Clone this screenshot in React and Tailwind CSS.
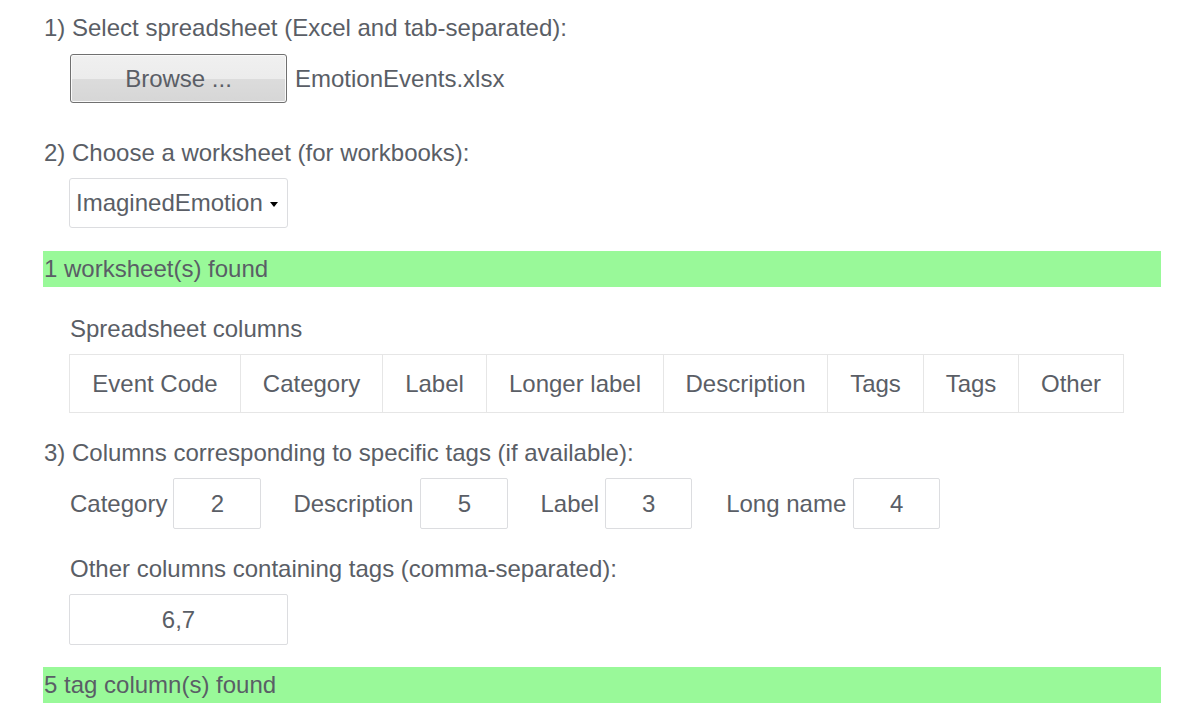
import React from "react";

const cols = [
  ["Event Code", 170],
  ["Category", 142],
  ["Label", 104],
  ["Longer label", 177],
  ["Description", 164],
  ["Tags", 96],
  ["Tags", 95],
  ["Other", 105],
];

function NumBox({ value, w }) {
  return (
    <div
      className="flex items-center justify-center h-[51px] border border-[#dcdde0] rounded-[2px] bg-white"
      style={{ width: w }}
    >
      {value}
    </div>
  );
}

export default function App() {
  return (
    <div
      className="w-[1186px] h-[719px] bg-white text-[#5a5e66] text-[24px] leading-[26px] overflow-hidden"
      style={{ fontFamily: '"Liberation Sans", Arial, sans-serif' }}
    >
      <div className="pl-[43px] w-[1161px]">
        <p className="pt-[15px] pl-[1px]">1) Select spreadsheet (Excel and tab-separated):</p>
        <div className="mt-[13px] ml-[27px] flex items-center gap-[8px]">
          <div className="w-[217px] h-[49px] rounded-[3px] border border-[#707070] bg-[linear-gradient(#f0f0f0_0%,#ececec_50%,#dcdcdc_50%,#d6d6d6_100%)] flex items-center justify-center shadow-[inset_0_0_0_1px_#fafafa]">
            Browse ...
          </div>
          <span>EmotionEvents.xlsx</span>
        </div>

        <p className="mt-[37px] pl-[1px]">2) Choose a worksheet (for workbooks):</p>
        <div className="mt-[12px] ml-[26px] w-[219px] h-[50px] border border-[#dcdde0] rounded-[3px] flex items-center pl-[6px]">
          <span>ImaginedEmotion</span>
          <svg width="8" height="5" viewBox="0 0 8 5" className="ml-[7px] mt-[2px]">
            <path d="M0 0 L8 0 L4 5 Z" fill="#000" />
          </svg>
        </div>

        <div className="mt-[23px] h-[36px] bg-[#99f999] flex items-center pl-[1px]">
          1 worksheet(s) found
        </div>

        <p className="mt-[29px] ml-[27px]">Spreadsheet columns</p>
        <div className="mt-[12px] ml-[26px] flex border border-[#e6e6e6] w-fit">
          {cols.map(([c, w], i) => (
            <div
              key={i}
              className={`h-[57px] flex items-center justify-center ${i > 0 ? "border-l border-[#e6e6e6]" : ""}`}
              style={{ width: w }}
            >
              {c}
            </div>
          ))}
        </div>

        <p className="mt-[27px] pl-[1px]">3) Columns corresponding to specific tags (if available):</p>
        <div className="mt-[12px] ml-[27px] flex items-center">
          <span>Category</span>
          <div className="ml-[6px]"><NumBox value="2" w={88} /></div>
          <span className="ml-[32px]">Description</span>
          <div className="ml-[7px]"><NumBox value="5" w={88} /></div>
          <span className="ml-[32px]">Label</span>
          <div className="ml-[6px]"><NumBox value="3" w={87} /></div>
          <span className="ml-[34px]">Long name</span>
          <div className="ml-[7px]"><NumBox value="4" w={87} /></div>
        </div>

        <p className="mt-[27px] ml-[27px]">Other columns containing tags (comma-separated):</p>
        <div className="mt-[12px] ml-[26px] w-[219px] h-[51px] border border-[#dcdde0] rounded-[2px] flex items-center justify-center">
          6,7
        </div>

        <div className="mt-[22px] h-[36px] bg-[#99f999] flex items-center pl-[1px]">
          5 tag column(s) found
        </div>
      </div>
    </div>
  );
}
